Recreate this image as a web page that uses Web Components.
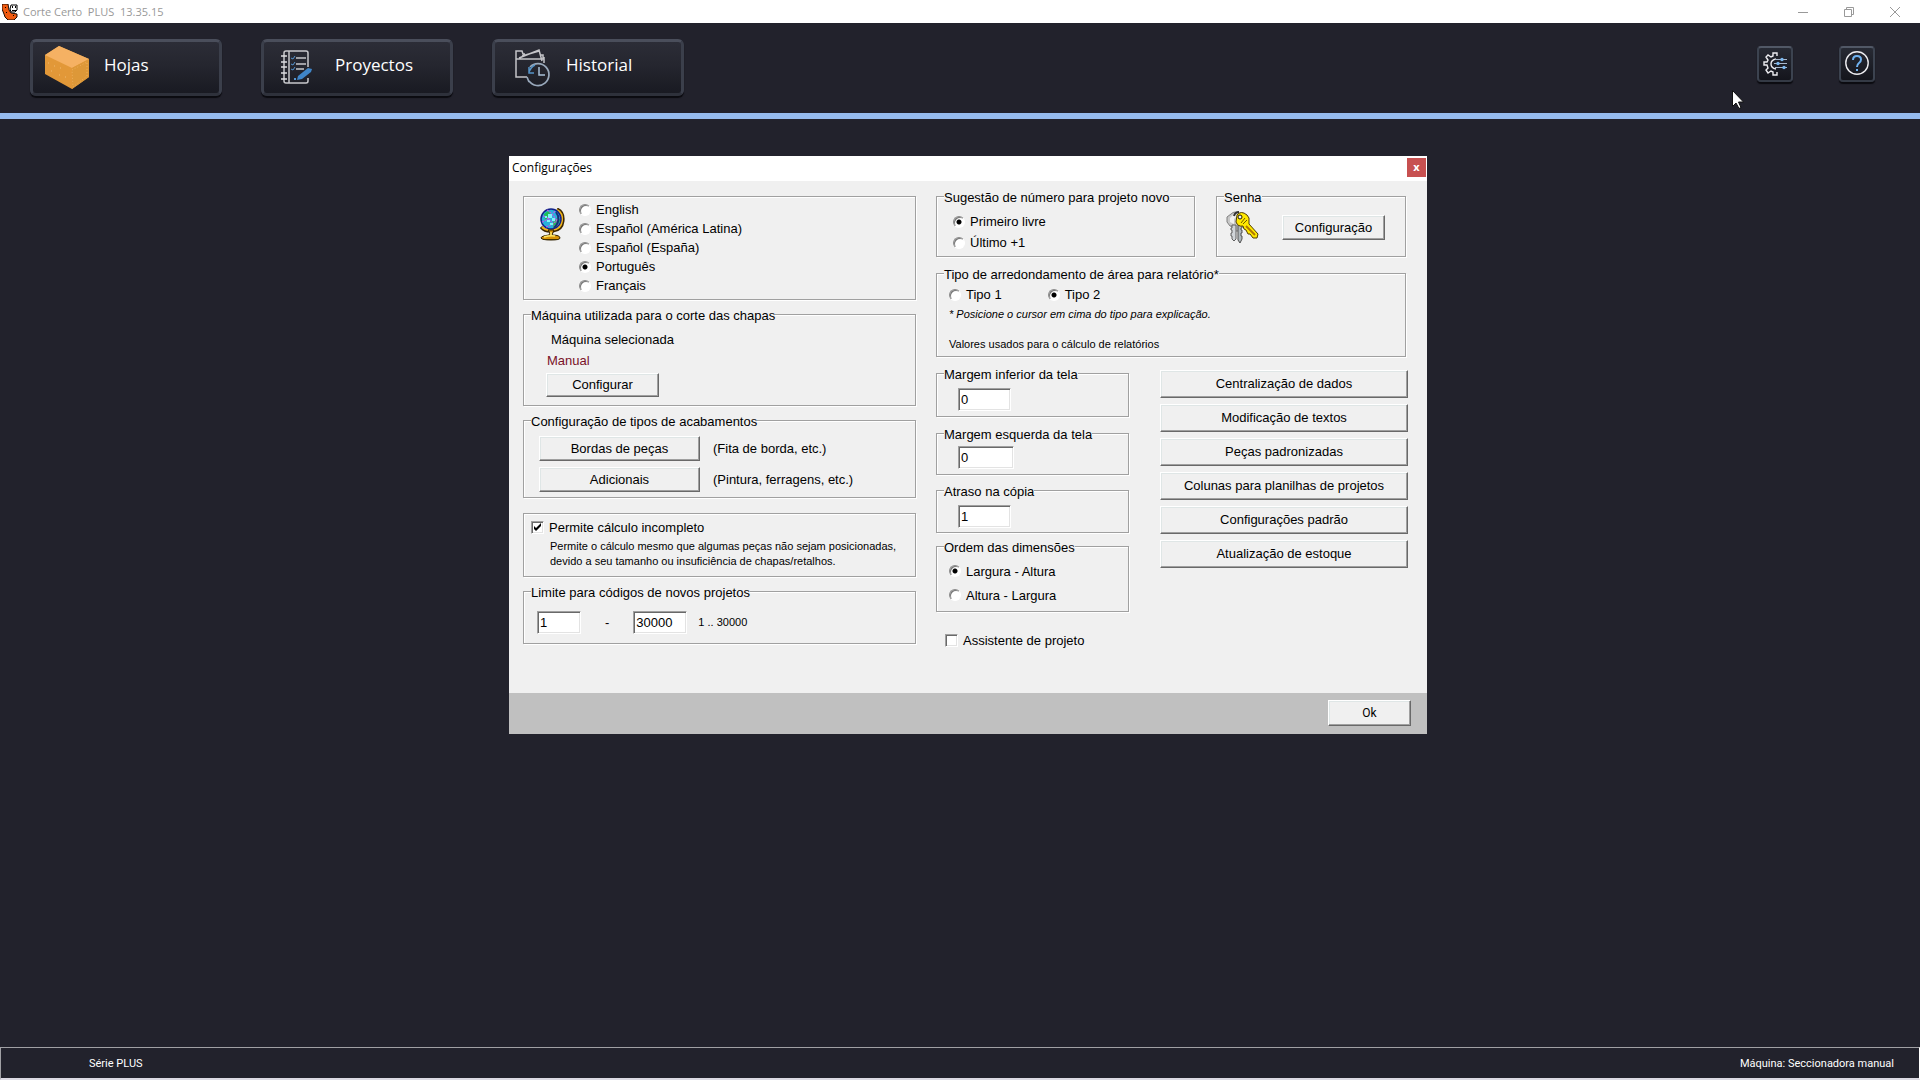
<!DOCTYPE html>
<html lang="pt">
<head>
<meta charset="utf-8">
<title>Corte Certo PLUS</title>
<style>
  html, body { margin: 0; height: 100%; background: #22222c; }
  body { font-family: "Liberation Sans", Arial, sans-serif; font-size: 13px; line-height: 15px; color: #000; }
</style>
</head>
<body>
<cut-app></cut-app>

<script>
const define = (name, html, setup) => {
  const template = document.createElement('template');
  template.innerHTML = html;
  customElements.define(name, class extends HTMLElement {
    constructor() {
      super();
      this.attachShadow({ mode: 'open' }).append(template.content.cloneNode(true));
    }
    connectedCallback() {
      if (setup && !this.ready) { this.ready = true; setup(this, this.shadowRoot); }
    }
  });
};

/* ---------- small controls ---------- */

define('bevel-button', `
<style>
  :host { display: block; }
  button { display: block; box-sizing: border-box; width: 100%; height: var(--h, 25px); margin: 0; padding: 0 0 1px;
    font: inherit; color: #000; background: #f0f0f0; border: 1px solid; border-color: #fff #696969 #696969 #fff;
    border-radius: 0; box-shadow: inset -1px -1px 0 #a0a0a0, inset 1px 1px 0 #dfe6e6; white-space: nowrap; }
</style>
<button type="button"><slot></slot></button>`);

define('number-field', `
<style>
  :host { display: block; width: var(--w, 53px); }
  input { display: block; box-sizing: border-box; width: 100%; height: 23px; margin: 0; padding: 0 2px 1px;
    font: inherit; color: #000; background: #fff; border: 1px solid; border-color: #a0a0a0 #fff #fff #a0a0a0;
    border-radius: 0; box-shadow: inset 1px 1px 0 #696969, inset -1px -1px 0 #e3e3e3; outline: none; }
</style>
<input type="text">`, (el, root) => {
  const input = root.querySelector('input');
  input.value = el.getAttribute('value');
  input.setAttribute('aria-label', el.getAttribute('label'));
});

define('radio-list', `
<style>
  :host { display: flex; flex-direction: column; }
  :host([row]) { flex-direction: row; gap: 46px; }
  label { display: flex; align-items: center; gap: 5px; height: var(--row, 21px); white-space: nowrap; }
  input { appearance: none; box-sizing: border-box; flex: none; width: 12px; height: 12px; margin: 0; border: 1px solid;
    border-color: #8a8a8a #fff #fff #8a8a8a; border-radius: 50%; background: #fff;
    box-shadow: inset 1px 1px 0 #777; }
  input:checked { background: radial-gradient(circle at 50% 50%, #000 2px, #fff 3px); }
</style>`, (el, root) => {
  const name = el.getAttribute('name');
  el.getAttribute('options').split('|').forEach(text => {
    const label = document.createElement('label');
    const input = document.createElement('input');
    const span = document.createElement('span');
    input.type = 'radio';
    input.name = name;
    input.checked = text === el.getAttribute('value');
    span.textContent = text;
    label.append(input, span);
    root.append(label);
  });
});

define('check-box', `
<style>
  :host { display: block; }
  label { display: flex; align-items: center; gap: 5px; }
  .mark { display: grid; flex: none; width: 13px; height: 13px; }
  input, svg { grid-area: 1 / 1; }
  input { appearance: none; box-sizing: border-box; width: 13px; height: 13px; margin: 0; background: #fff;
    border: 1px solid; border-color: #a0a0a0 #fff #fff #a0a0a0;
    box-shadow: inset 1px 1px 0 #696969, inset -1px -1px 0 #e3e3e3; }
  svg { display: none; pointer-events: none; }
  input:checked + svg { display: block; }
</style>
<label><span class="mark"><input type="checkbox"><svg width="13" height="13" viewBox="0 0 13 13"><path d="M3 5v3l2 2 5-5V2L5 7z"/></svg></span><slot></slot></label>`,
(el, root) => { root.querySelector('input').checked = el.hasAttribute('checked'); });

define('group-box', `
<style>
  :host { display: block; }
  :host(:not([caption])) { padding-top: 8px; }
  fieldset { box-sizing: border-box; width: 100%; min-width: 0; margin: 0; padding: var(--top, 6px) 7px var(--bottom, 5px);
    border: 1px solid #a0a0a0; box-shadow: 1px 1px 0 #fff, inset 1px 1px 0 #fff; }
  legend { padding: 2px 0 0; background: #f0f0f0; white-space: nowrap; }
  legend:empty { display: none; }
</style>
<fieldset><legend></legend><slot></slot></fieldset>`,
(el, root) => { root.querySelector('legend').textContent = el.getAttribute('caption') || ''; });

/* ---------- drawings ---------- */

define('globe-icon', `
<style>:host { display: block; } svg { display: block; }</style>
<svg width="25" height="33" viewBox="0 0 25 33">
  <path d="M17 1q7 3 6 12-1 9-10 10-8 1-12-4" fill="none" stroke="#3c2600" stroke-width="3"/>
  <path d="M17 2q6 3 5 11-1 8-9 9-7 1-11-3" fill="none" stroke="#f0b418" stroke-width="2"/>
  <circle cx="11" cy="11" r="10" fill="#28b0dc" stroke="#102088" stroke-width="1.5"/>
  <path d="M4 6l4-3 3 2-2 5-4 2zM13 14l5-5 2 4-3 5-4 2z" fill="#1fbe58"/>
  <path d="M7 2q9 6 11 15M3 8q8 2 12 12M2 14q8-3 13-11M6 19Q15 16 20 8" fill="none" stroke="#c058e8" stroke-width="1.2" stroke-dasharray="2 1"/>
  <path d="M8 6h4v4H8zM12 10h3v3h-3zM7 12h3v2H7zM5 8h2v2H5zM10 15h3v2h-3z" fill="#7ff4fa"/>
  <path d="M16 4q6 8-2 16" fill="none" stroke="#183078" stroke-width="2"/>
  <path d="M8 22h6l-2 5q8 0 8 3 0 2-9 2T1 30q0-2 8-3l1-2z" fill="#d89408" stroke="#302000"/>
  <path d="M4 29q6-2 11-1M11 24v3" fill="none" stroke="#ffe868" stroke-width="1.5"/>
  <path d="M3 31.500h15" stroke="#403000"/>
</svg>`);

define('keys-icon', `
<style>:host { display: block; } svg { display: block; }</style>
<svg width="33" height="33" viewBox="0 0 33 33">
  <path d="M5 3q4-4 9 0l1 9-1 3v5H9v-4L4 15 1 11V6z" fill="#c8c8c8" stroke="#808080"/>
  <path d="M8 3L4 7v4l4 2V8l4-4z" fill="#f0f0f0"/>
  <path d="M6 14h4v14l-2 2-2-2v-3H5v-3h1v-3H5v-2h1z" fill="#d0d4d8" stroke="#606060"/>
  <path d="M12 14h4v3h-1v2h1v3h-1v3h1v3l-2 4-2-3z" fill="#b0b8bc" stroke="#505050"/>
  <path d="M8 5q1-4 5-4" fill="none" stroke="#303030" stroke-width="2"/>
  <path d="M11 4q4-5 10 0l2 3v6l9 10-1 4-4 0-3-4-2 0-2-4-2-1-1-3q-5 1-7-4z" fill="#ffe800" stroke="#503c00"/>
  <path d="M20 15l9 9" stroke="#b07800" stroke-width="2"/>
  <circle cx="14" cy="6" r="2" fill="#f0f0f0" stroke="#201800"/>
  <path d="M15 12l4-5M17 13l4-4" stroke="#705800"/>
</svg>`);

define('box-icon', `
<style>:host { display: block; } svg { display: block; }</style>
<svg width="44" height="44" viewBox="0 0 44 44">
  <path d="M0 9L14 0l30 13v18L27 43 0 28z" fill="#e29838"/>
  <path d="M0 9L14 0l30 13-17 9z" fill="#f5b163"/>
  <path d="M27 22l17-9v18L27 43z" fill="#dd9838"/>
  <path d="M27 24l15-8v14L28 41z" fill="none" stroke="#efad59" stroke-dasharray="1 2"/>
  <path d="M3 17h1m5 3h1m5 2h1m4 9h1M6 25h1m7 4h1" stroke="#f0ba70"/>
</svg>`);

define('notebook-icon', `
<style>:host { display: block; } svg { display: block; }</style>
<svg width="44" height="44" viewBox="0 0 44 44" fill="none">
  <path d="M32 21V7q0-2-2-2H10Q8 5 8 7v28q0 2 2 2h20q2 0 2-2v-3M13 5v32" stroke="#c8c8cc" stroke-width="1.5"/>
  <path d="M5 10h6M5 16h6M5 21h6M5 27h6M5 33h6" stroke="#dcdce0" stroke-width="1.5"/>
  <path d="M20 12h10M20 18h10M20 23h8" stroke="#c8c8cc" stroke-width="1.5"/>
  <path d="M15 12l2 1 2-3M15 18l2 1 2-3M15 23l2 1 2-3" stroke="#5594d0"/>
  <path d="M32 22l4 1-1 3-9 7-5 1 1-4z" fill="#3f85c8"/>
  <path d="M18 33h2" stroke="#5594d0" stroke-width="2"/>
</svg>`);

define('history-icon', `
<style>:host { display: block; } svg { display: block; }</style>
<svg width="44" height="44" viewBox="0 0 44 44" fill="none">
  <g transform="translate(1 1)">
  <path d="M19 30H8V4h6l1 3h2M8 12h27V8h-3M11 11L31 3l3 11M14 9l17-5M36 10v6" stroke="#c4c4c8" stroke-width="1.5"/>
  <path d="M22 20a11 11 0 1 1-1 14M19 30l2 5" stroke="#99a9bc" stroke-width="1.7"/>
  <path d="M21 20v6h5M21 25q2-5 6-7" stroke="#5594c8" stroke-width="1.5"/>
  <path d="M31 20v8h6" stroke="#a8c0d8" stroke-width="1.5"/>
  </g>
</svg>`);

define('gear-icon', `
<style>:host { display: block; } svg { display: block; }</style>
<svg width="26" height="26" viewBox="0 0 26 26" fill="none">
  <path d="M15 6V3h-4v3L9 7 6 5 4 7l2 3-1 2H2v3h3l1 3-2 2 2 3 3-2 2 1v3h4v-3" stroke="#ececf0" stroke-width="1.4"/>
  <path d="M14 9q-5 1-5 5t5 5" stroke="#ececf0" stroke-width="1.4"/>
  <path d="M13 9.500h12M12 13.500h13M13 17.500h12" stroke="#a8b8cc"/>
  <circle cx="20" cy="9.500" r="1.700" fill="#7cb8ee"/><circle cx="16" cy="13.500" r="1.700" fill="#7cb8ee"/><circle cx="22" cy="17.500" r="1.700" fill="#7cb8ee"/>
</svg>`);

define('help-icon', `
<style>:host { display: block; } svg { display: block; }</style>
<svg width="26" height="26" viewBox="0 0 26 26" fill="none">
  <circle cx="13" cy="13" r="11.200" stroke="#ececf0" stroke-width="1.4"/>
  <path d="M9 10q0-4 4-4t4 3.500q0 2-2 3.500t-2 4" stroke="#6fb2f0" stroke-width="2"/>
  <path d="M13 19v2" stroke="#6fb2f0" stroke-width="2"/>
</svg>`);

/* ---------- window frame ---------- */

define('title-bar', `
<style>
  :host { display: flex; align-items: center; gap: 5px; height: 23px; padding: 0 2px; background: #fff; color: #999;
    font: 11px/16px "Open Sans", "Noto Sans", sans-serif; white-space: pre; }
  svg { display: block; }
  .controls { display: flex; margin-left: auto; }
  button { display: grid; place-items: center; width: 46px; height: 20px; padding: 0; border: 0; background: none; }
</style>
<svg width="16" height="16" viewBox="0 0 16 16">
  <path d="M0 0h6l1 6 2 3 6 1v3l-3 3H6l-3-3-1-3-2-5z" fill="#f05a10" stroke="#1c0c04"/>
  <path d="M9 1h6v5l-2 2H9L8 5z" fill="#fff" stroke="#000"/>
  <path d="M10 2h1v2h-1zM13 2h1v2h-1zM10 6h4v1h-4zM3 3h1v1H3zM4 8h1v1H4zM11 11h1v1h-1z"/>
</svg>
<span>Corte Certo  PLUS  13.35.15</span>
<div class="controls">
  <button type="button" aria-label="Minimizar"><svg width="10" height="10"><path d="M0 5.500h10" stroke="#999"/></svg></button>
  <button type="button" aria-label="Restaurar"><svg width="10" height="10" fill="none" stroke="#999"><path d="M.5 2.500h7v7h-7zM2.500 2V.5h7v7H8"/></svg></button>
  <button type="button" aria-label="Fechar"><svg width="10" height="10"><path d="M0 0l10 10M10 0L0 10" stroke="#999"/></svg></button>
</div>`);

define('nav-button', `
<style>
  :host { display: block; }
  button { display: flex; align-items: center; gap: 15px; box-sizing: border-box; width: 192px; height: 57px; margin: 0;
    padding: 0 12px; text-align: left; font: 17px/24px "Open Sans", "Noto Sans", sans-serif; color: #fff;
    border: 3px solid; border-color: #4a4e5b #3b3f4b #2e313b #3b3f4b; border-radius: 6px;
    background: linear-gradient(#2c2d37, #25262f 45%, #191a22); box-shadow: 0 2px 1px #0b0b10; }
  span { padding-bottom: 6px; }
</style>
<button type="button"><slot name="icon"></slot><span><slot></slot></span></button>`);

define('tool-button', `
<style>
  :host { display: block; }
  button { display: grid; place-items: center; box-sizing: border-box; width: 36px; height: 36px; margin: 0; padding: 0 0 2px;
    border: 2px solid; border-color: #515866 #3c4350 #343a45 #3c4350; border-radius: 4px;
    background: linear-gradient(#272a34, #14151c); box-shadow: 0 2px 1px #0b0b10; }
</style>
<button type="button"><slot></slot></button>`,
(el, root) => root.querySelector('button').setAttribute('aria-label', el.getAttribute('label')));

define('main-toolbar', `
<style>
  :host { display: flex; align-items: flex-start; justify-content: space-between; height: 74px; padding: 16px 45px 0 30px;
    border-bottom: 6px solid #96bbee; }
  nav { display: flex; gap: 39px; }
  .tools { display: flex; gap: 46px; padding-top: 7px; }
</style>
<nav>
  <nav-button><box-icon slot="icon"></box-icon>Hojas</nav-button>
  <nav-button><notebook-icon slot="icon"></notebook-icon>Proyectos</nav-button>
  <nav-button><history-icon slot="icon"></history-icon>Historial</nav-button>
</nav>
<div class="tools">
  <tool-button label="Configuración"><gear-icon></gear-icon></tool-button>
  <tool-button label="Ayuda"><help-icon></help-icon></tool-button>
</div>`);

define('status-bar', `
<style>
  :host { display: flex; align-items: center; justify-content: space-between; box-sizing: border-box; height: 33px;
    padding: 2px 25px 0 88px; border: 1px solid; border-color: #a0a0a4 #fff #dcdae4 #a0a0a4; border-bottom-width: 2px;
    color: #fff; font: 11px/16px Roboto, "Liberation Sans", sans-serif; }
</style>
<span>Série PLUS</span><span>Máquina: Seccionadora manual</span>`);

/* ---------- settings dialog ---------- */

define('settings-dialog', `
<style>
  :host { display: block; width: 918px; background: #f0f0f0; }
  header { display: flex; align-items: center; justify-content: space-between; height: 25px; padding: 0 1px 0 3px;
    background: #fff; font: 12px/16px "Open Sans", "Noto Sans", sans-serif; }
  h1 { margin: 0 0 2px; font: inherit; }
  header button { width: 19px; height: 19px; margin: 0 0 2px; padding: 0 0 2px; border: 0; background: #c75050; color: #fff;
    font: bold 11px/15px "Open Sans", sans-serif; }
  .body { display: flex; gap: 20px; padding: 7px 19px 45px 14px; }
  .left { display: flex; flex-direction: column; gap: 6px; width: 393px; }
  .right { display: flex; flex-direction: column; flex: 1; gap: 8px; }
  .line { display: flex; align-items: center; }
  .top { display: flex; justify-content: space-between; }
  .top, .area { margin-right: 2px; }
  .lower { display: flex; justify-content: space-between; }
  .fields { display: flex; flex-direction: column; gap: 5px; width: 193px; }
  .actions { display: flex; flex-direction: column; gap: 6px; width: 248px; padding-top: 5px; --h: 28px; }
  .small { font-size: 11px; line-height: 15px; }
  .lang { --top: 3px; --bottom: 4px; --row: 19px; }
  .lang .line { align-items: flex-start; gap: 14px; padding-left: 9px; }
  .lang globe-icon { padding-top: 8px; }
  .machine { --bottom: 8px; }
  .machine div { padding-left: 15px; line-height: 21px; }
  .machine .caption { padding-left: 20px; }
  .machine .name { padding-left: 16px; color: #7a1028; }
  .machine bevel-button { width: 113px; margin-top: 2px; --h: 24px; }
  .finish .rows { display: flex; flex-direction: column; gap: 6px; padding: 1px 0 0 8px; }
  .finish .line { gap: 13px; }
  .finish bevel-button { width: 161px; }
  .partial { padding-top: 9px; --top: 6px; --bottom: 7px; }
  .partial p { margin: 4px 0 0; padding-left: 19px; }
  .limits { --top: 11px; --bottom: 9px; }
  .limits .line { padding-left: 6px; gap: 24px; }
  .limits .first { --w: 44px; }
  .limits .last { --w: 54px; }
  .limits .small { margin-left: -13px; }
  .suggest { width: 259px; --bottom: 3px; }
  .suggest radio-list { padding-left: 9px; }
  .password { width: 190px; --bottom: 12px; }
  .password .line { gap: 23px; padding-left: 2px; }
  .password bevel-button { width: 103px; }
  .area { --top: 2px; --bottom: 4px; }
  .area radio-list, .area p { margin: 0; padding-left: 5px; }
  .area .hint { padding-top: 2px; }
  .area .note { padding-top: 15px; }
  .fields number-field { margin-left: 14px; }
  .edge { margin-top: 3px; --top: 4px; --w: 56px; }
  .delay { margin-top: 2px; --bottom: 4px; }
  .order { --row: 24px; --top: 4px; --bottom: 4px; }
  .order radio-list { padding-left: 5px; }
  .wizard { padding: 16px 0 0 9px; }
  footer { display: flex; justify-content: flex-end; padding: 7px 16px 8px 0; background: #c0c0c0; }
  footer bevel-button { width: 83px; font: 12px/16px Roboto, "Liberation Sans", sans-serif; --h: 26px; }
</style>
<header><h1>Configurações</h1><button type="button" aria-label="Fechar">x</button></header>
<div class="body">
  <div class="left">
    <group-box class="lang"><div class="line"><globe-icon></globe-icon>
      <radio-list name="lang" value="Português" options="English|Español (América Latina)|Español (España)|Português|Français"></radio-list></div></group-box>
    <group-box class="machine" caption="Máquina utilizada para o corte das chapas">
      <div class="caption">Máquina selecionada</div>
      <div class="name">Manual</div>
      <div><bevel-button>Configurar</bevel-button></div>
    </group-box>
    <group-box class="finish" caption="Configuração de tipos de acabamentos"><div class="rows">
      <div class="line"><bevel-button>Bordas de peças</bevel-button><span>(Fita de borda, etc.)</span></div>
      <div class="line"><bevel-button>Adicionais</bevel-button><span>(Pintura, ferragens, etc.)</span></div></div>
    </group-box>
    <group-box class="partial">
      <check-box checked>Permite cálculo incompleto</check-box>
      <p class="small">Permite o cálculo mesmo que algumas peças não sejam posicionadas,<br>devido a seu tamanho ou insuficiência de chapas/retalhos.</p>
    </group-box>
    <group-box class="limits" caption="Limite para códigos de novos projetos"><div class="line">
      <number-field class="first" value="1" label="Código inicial"></number-field><span>-</span>
      <number-field class="last" value="30000" label="Código final"></number-field><span class="small">1 .. 30000</span></div>
    </group-box>
  </div>
  <div class="right">
    <div class="top">
      <group-box class="suggest" caption="Sugestão de número para projeto novo">
        <radio-list name="number" value="Primeiro livre" options="Primeiro livre|Último +1"></radio-list></group-box>
      <group-box class="password" caption="Senha"><div class="line"><keys-icon></keys-icon><bevel-button>Configuração</bevel-button></div></group-box>
    </div>
    <group-box class="area" caption="Tipo de arredondamento de área para relatório*">
      <radio-list row name="area" value="Tipo 2" options="Tipo 1|Tipo 2"></radio-list>
      <p class="small hint"><em>* Posicione o cursor em cima do tipo para explicação.</em></p>
      <p class="small note">Valores usados para o cálculo de relatórios</p>
    </group-box>
    <div class="lower">
      <div class="fields">
        <group-box caption="Margem inferior da tela"><number-field value="0" label="Margem inferior da tela"></number-field></group-box>
        <group-box class="edge" caption="Margem esquerda da tela"><number-field value="0" label="Margem esquerda da tela"></number-field></group-box>
        <group-box class="delay" caption="Atraso na cópia"><number-field value="1" label="Atraso na cópia"></number-field></group-box>
        <group-box class="order" caption="Ordem das dimensões">
          <radio-list name="order" value="Largura - Altura" options="Largura - Altura|Altura - Largura"></radio-list></group-box>
        <check-box class="wizard">Assistente de projeto</check-box>
      </div>
      <div class="actions">
        <bevel-button>Centralização de dados</bevel-button>
        <bevel-button>Modificação de textos</bevel-button>
        <bevel-button>Peças padronizadas</bevel-button>
        <bevel-button>Colunas para planilhas de projetos</bevel-button>
        <bevel-button>Configurações padrão</bevel-button>
        <bevel-button>Atualização de estoque</bevel-button>
      </div>
    </div>
  </div>
</div>
<footer><bevel-button>Ok</bevel-button></footer>`);

define('cut-app', `
<style>
  :host { display: flex; flex-direction: column; position: relative; min-height: 100vh; background: #22222c; }
  main { position: relative; flex: 1; }
  settings-dialog { position: absolute; top: 37px; left: calc(50% - 451px); }
  .pointer { position: absolute; top: 90px; right: 176px; }
</style>
<title-bar></title-bar>
<main-toolbar></main-toolbar>
<main><settings-dialog></settings-dialog></main>
<status-bar></status-bar>
<svg class="pointer" width="12" height="19" viewBox="0 0 12 19"><path d="M.5.5v16L4 13l3 5.500 2-1L6.500 12H11.500z" fill="#fff" stroke="#111"/></svg>`);
</script>
</body>
</html>
